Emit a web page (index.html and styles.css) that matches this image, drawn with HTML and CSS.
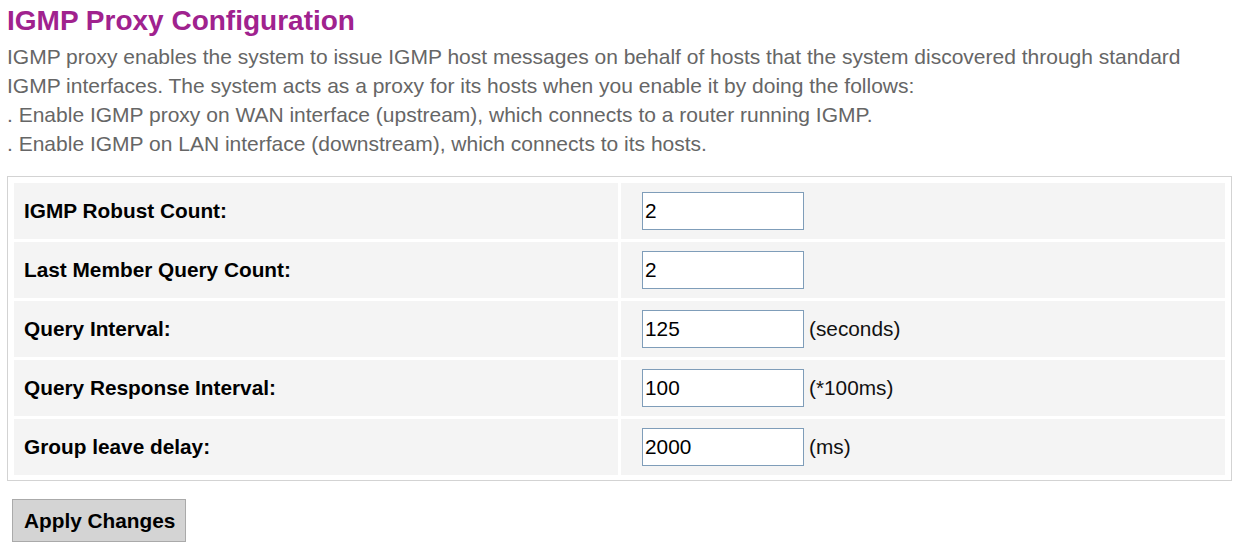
FILE: index.html
```html
<!DOCTYPE html>
<html lang="en">
<head>
<meta charset="utf-8">
<title>IGMP Proxy Configuration</title>
<link rel="stylesheet" href="styles.css">
</head>
<body>
<div class="page">
  <h1 class="title">IGMP Proxy Configuration</h1>
  <p class="intro">IGMP proxy enables the system to issue IGMP host messages on behalf of hosts that the system discovered through standard IGMP interfaces. The system acts as a proxy for its hosts when you enable it by doing the follows:<br>. Enable IGMP proxy on WAN interface (upstream), which connects to a router running IGMP.<br>. Enable IGMP on LAN interface (downstream), which connects to its hosts.</p>
  <form class="form">
    <div class="panel">
      <div class="label">IGMP Robust Count:</div>
      <div class="value"><input class="field" type="text" value="2"></div>
      <div class="label">Last Member Query Count:</div>
      <div class="value"><input class="field" type="text" value="2"></div>
      <div class="label">Query Interval:</div>
      <div class="value"><input class="field" type="text" value="125"><span class="unit">(seconds)</span></div>
      <div class="label">Query Response Interval:</div>
      <div class="value"><input class="field" type="text" value="100"><span class="unit">(*100ms)</span></div>
      <div class="label">Group leave delay:</div>
      <div class="value"><input class="field" type="text" value="2000"><span class="unit">(ms)</span></div>
    </div>
    <div class="actions">
      <button class="btn" type="button">Apply Changes</button>
    </div>
  </form>
</div>
</body>
</html>
```
FILE: styles.css
```css
html, body {
  margin: 0;
  padding: 0;
  background: #ffffff;
}

.page {
  padding: 5px 17px 0 7px;
  font-family: "Liberation Sans", Arial, sans-serif;
}

.title {
  margin: 0;
  font-size: 28px;
  font-weight: bold;
  line-height: 32px;
  color: #a0228e;
}

.intro {
  max-width: 1210px;
  margin: 5px 0 0 0;
  font-size: 21px;
  line-height: 29px;
  color: #666666;
}

.form {
  margin: 18px 0 0 0;
}

.panel {
  display: grid;
  grid-template-columns: 1fr 1fr;
  gap: 3px;
  padding: 6px 6px 5px 6px;
  border: 1px solid #d3d3d3;
}

.label,
.value {
  display: flex;
  align-items: center;
  height: 56px;
  background: #f4f4f4;
}

.label {
  padding-left: 10px;
  font-size: 20.8px;
  font-weight: bold;
  color: #000000;
}

.value {
  padding-left: 21px;
}

.field {
  box-sizing: border-box;
  width: 162px;
  height: 38px;
  margin: 0;
  padding: 0 2px;
  border: 1px solid #7f9db9;
  background: #ffffff;
  font-family: "Liberation Sans", Arial, sans-serif;
  font-size: 20.8px;
  color: #000000;
  outline: none;
}

.unit {
  margin-left: 5px;
  font-size: 20.8px;
  color: #111111;
}

.actions {
  display: flex;
  margin-top: 18px;
  padding-left: 5px;
}

.btn {
  box-sizing: border-box;
  height: 43px;
  margin: 0;
  padding: 0 10px 0 11px;
  border: 1px solid #aaaaaa;
  background: #d4d4d4;
  font-family: "Liberation Sans", Arial, sans-serif;
  font-size: 20.8px;
  font-weight: bold;
  color: #000000;
}
```
